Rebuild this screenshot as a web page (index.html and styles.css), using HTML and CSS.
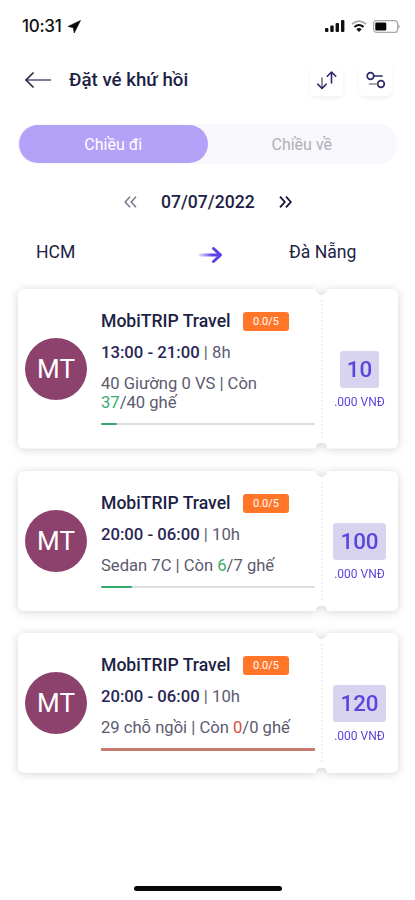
FILE: index.html
```html
<!DOCTYPE html>
<html lang="vi">
<head>
<meta charset="utf-8">
<meta name="viewport" content="width=device-width, initial-scale=1">
<title>Đặt vé khứ hồi</title>
<link rel="stylesheet" href="styles.css">
</head>
<body>
<div class="screen">
  <div class="status">
    <span class="clock">10:31</span>
    <svg class="location" width="13" height="13" viewBox="0 0 13 13"><path d="M12.5.5 0 6.400l5.300 1.300.9 5.300z" fill="#080808" stroke="#080808" stroke-width=".6" stroke-linejoin="round"/></svg>
    <svg class="signal" width="20" height="12" viewBox="0 0 20 12" fill="#111"><rect x="0" y="8" width="3.4" height="4" rx="1"/><rect x="5.3" y="5.5" width="3.4" height="6.5" rx="1"/><rect x="10.6" y="3" width="3.4" height="9" rx="1"/><rect x="16" y="0" width="3.4" height="12" rx="1"/></svg>
    <svg class="wifi" width="16" height="12" viewBox="0 0 16 12" fill="none"><path d="M1 4.2q7-6.2 14 0" stroke="#aaa" stroke-width="1.8"/><path d="M3.4 7q4.6-4 9.2 0" stroke="#111" stroke-width="2.1"/><path d="M5.3 9.2q2.7-2.2 5.4 0L8 12z" fill="#111"/></svg>
    <svg class="battery" width="28" height="13" viewBox="0 0 28 13"><rect x=".6" y=".6" width="24" height="11.8" rx="3" fill="#fff" stroke="#aaa" stroke-width="1.2"/><rect x="2.3" y="2.4" width="11" height="8.2" rx="1.4" fill="#080808"/><path d="M25.5 4.2q2.2 2.3 0 4.6z" fill="#888"/></svg>
  </div>

  <header class="header">
    <svg width="27" height="16" viewBox="0 0 27 16" fill="none" stroke-linecap="round" stroke-linejoin="round"><path d="M1 8h24.500" stroke="#55536f" stroke-width="1.500"/><path d="M8 1 1 8l7 7" stroke="#27244f" stroke-width="1.700"/></svg>
    <h1 class="title">Đặt vé khứ hồi</h1>
    <button class="tool" aria-label="Sắp xếp"><svg width="20" height="19" viewBox="0 0 20 19" fill="none" stroke-width="1.600" stroke-linecap="round" stroke-linejoin="round"><path d="M5 7v10" stroke="#777589"/><path d="m.8 13.200 4.200 4.200 4.200-4.200M14.500 12V1M10.300 5.200 14.500 1l4.200 4.200" stroke="#2b2867"/></svg></button>
    <button class="tool" aria-label="Lọc"><svg width="20" height="18" viewBox="0 0 20 18" fill="none" stroke="#2b2867" stroke-width="1.700" stroke-linecap="round"><circle cx="4.500" cy="5" r="3.300"/><path d="M8.500 5H16"/><circle cx="15" cy="13" r="3.300"/><path d="M3.500 13H11" stroke="#8d8b9c"/></svg></button>
  </header>

  <nav class="tabs">
    <button class="tab active">Chiều đi</button>
    <button class="tab">Chiều về</button>
  </nav>

  <div class="date">
    <svg width="13" height="12" viewBox="0 0 13 12" fill="none" stroke="#77758a" stroke-width="1.500"><path d="M6 .7 1.200 6 6 11.300M12 .7 7.200 6l4.800 5.300"/></svg>
    <span class="day">07/07/2022</span>
    <svg width="13" height="12" viewBox="0 0 13 12" fill="none" stroke="#161438" stroke-width="1.800"><path d="M1 .7 5.800 6 1 11.300M7 .7 11.800 6 7 11.300"/></svg>
  </div>

  <div class="route">
    <span class="from">HCM</span>
    <svg width="25" height="18" viewBox="0 0 25 18" fill="none" stroke-linecap="round" stroke-linejoin="round"><defs><linearGradient id="fade" gradientUnits="userSpaceOnUse" x1="0" y1="0" x2="14" y2="0"><stop offset="0" stop-color="#5a42e8" stop-opacity=".1"/><stop offset="1" stop-color="#5a42e8"/></linearGradient></defs><path d="M2 9h20" stroke="url(#fade)" stroke-width="2.800"/><path d="m15.500 2.500 7 6.500-7 6.500" stroke="#5a42e8" stroke-width="3"/></svg>
    <span class="to">Đà Nẵng</span>
  </div>

  <main class="list">
    <div class="lift"><article class="card tall">
      <div class="avatar">MT</div>
      <div class="body">
        <div class="name"><h2>MobiTRIP Travel</h2><span class="rate">0.0/5</span></div>
        <p class="time"><b>13:00 - 21:00</b> | 8h</p>
        <p class="seats">40 Giường 0 VS | Còn<br><i>37</i>/40 ghế</p>
        <div class="bar"><div class="fill" style="width:7.5%"></div></div>
      </div>
      <div class="stub"><strong>10</strong><span class="unit">.000 VNĐ</span></div>
    </article></div>
    <div class="lift"><article class="card">
      <div class="avatar">MT</div>
      <div class="body">
        <div class="name"><h2>MobiTRIP Travel</h2><span class="rate">0.0/5</span></div>
        <p class="time"><b>20:00 - 06:00</b> | 10h</p>
        <p class="seats">Sedan 7C | Còn <i>6</i>/7 ghế</p>
        <div class="bar"><div class="fill" style="width:14.3%"></div></div>
      </div>
      <div class="stub"><strong>100</strong><span class="unit">.000 VNĐ</span></div>
    </article></div>
    <div class="lift"><article class="card full">
      <div class="avatar">MT</div>
      <div class="body">
        <div class="name"><h2>MobiTRIP Travel</h2><span class="rate">0.0/5</span></div>
        <p class="time"><b>20:00 - 06:00</b> | 10h</p>
        <p class="seats">29 chỗ ngồi | Còn <i>0</i>/0 ghế</p>
        <div class="bar"><div class="fill" style="width:100%"></div></div>
      </div>
      <div class="stub"><strong>120</strong><span class="unit">.000 VNĐ</span></div>
    </article></div>
  </main>
  <div class="home"></div>
</div>
</body>
</html>
```
FILE: styles.css
```css
* { box-sizing: border-box; margin: 0; padding: 0; }
body { background: #fff; color: #211f45; font-family: Roboto, "Liberation Sans", sans-serif; }
button { border: 0; background: none; font: inherit; }
svg { display: block; flex: none; }
.screen { width: 415px; height: 900px; display: flex; flex-direction: column; overflow: hidden; }

.status { height: 52px; padding: 0 14px 0 22px; display: flex; align-items: center; }
.clock { width: 42px; font: 500 17px/20px Inter, sans-serif; letter-spacing: -.3px; color: #111; }
.location { margin-left: 4px; }
.signal { margin-left: auto; }
.wifi { margin-left: 6px; }
.battery { margin-left: 6px; }

.header { height: 58px; padding: 0 23px 2px 25px; display: flex; align-items: center; }
.title { flex: 1; margin-left: 17px; font-size: 18.7px; font-weight: 500; line-height: 24px; }
.tool { width: 33px; height: 31px; display: grid; place-items: center; border-radius: 5px; box-shadow: 0 2px 5px rgba(0,0,0,.06); }
.tool + .tool { margin-left: 16px; }

.tabs { height: 40px; margin: 14px 18px 0; display: flex; padding: 1px; border-radius: 20px; background: #f8f7fc; }
.tab { flex: 1; border-radius: 19px; font-size: 16px; color: #b0afb7; }
.tab.active { background: #b3a2f7; color: #fff; }

.date { height: 28px; margin-top: 24px; display: flex; align-items: center; padding-left: 124px; }
.day { width: 95px; margin: 0 23px 0 24px; font-size: 17.6px; font-weight: 500; line-height: 24px; white-space: nowrap; }

.route { height: 30px; margin-top: 24px; padding: 0 59px 0 36px; display: grid; grid-template-columns: 162px 25px 67px; column-gap: 0; align-items: center; font-size: 17.6px; }
.route span { line-height: 24px; white-space: nowrap; margin-top: -6px; }
.route .to { margin-left: 66px; }

.list { margin: 19px 17px 0 18px; display: flex; flex-direction: column; gap: 22px; }
.lift { filter: drop-shadow(0 1px 5px rgba(0,0,0,.17)); }
.card {
  display: grid; grid-template-columns: 62px 214px 77px; column-gap: 14px; align-items: center;
  padding-left: 7px; border-radius: 6px; background: #fff;
  -webkit-mask: radial-gradient(circle 6px at 303.500px 0, transparent 95%, #000) top / 100% 51% no-repeat,
    radial-gradient(circle 6px at 303.500px 100%, transparent 95%, #000) bottom / 100% 51% no-repeat;
  mask: radial-gradient(circle 6px at 303.500px 0, transparent 95%, #000) top / 100% 51% no-repeat,
    radial-gradient(circle 6px at 303.500px 100%, transparent 95%, #000) bottom / 100% 51% no-repeat;
}
.avatar { width: 62px; height: 62px; border-radius: 50%; display: grid; place-items: center; background: #8d426d; color: #fff; font-size: 26px; }
.body { padding: 20px 0 23px; }
.tall .body { padding-bottom: 24px; }
.name { display: flex; align-items: center; height: 24px; }
.name h2 { width: 142px; font-size: 17.6px; font-weight: 500; line-height: 24px; white-space: nowrap; }
.rate { width: 46px; height: 19px; border-radius: 3px; background: #ff7629; color: #fff; font-size: 11px; line-height: 19px; text-align: center; }
.time { margin-top: 8px; font-size: 16.7px; line-height: 24px; color: #5c5a70; white-space: nowrap; }
.time b { font-weight: 500; color: #292657; }
.seats { margin-top: 9px; font-size: 16.6px; line-height: 19px; color: #5c5a70; white-space: nowrap; }
.seats i { font-style: normal; color: #35ad6c; }
.bar { height: 2px; margin-top: 11px; background: #dcdcdf; border-radius: 1px; }
.fill { height: 2px; background: #35a86c; border-radius: 1px; }
.full .seats i { color: #d44d3c; }
.full .bar, .full .fill { height: 3px; background: #c57b70; }
.full .body { padding-bottom: 22px; }

.stub { align-self: stretch; margin-left: -8px; display: flex; flex-direction: column; align-items: center; justify-content: center; padding: 21px 10px 0 0; border-left: 2px dotted #f0f0f2; clip-path: inset(10px 0); }
.stub strong { height: 37px; padding: 0 7px; border-radius: 3px; background: #d8d3ee; color: #5946dc; font-size: 22.400px; font-weight: 500; line-height: 37px; }
.unit { height: 20px; padding-top: 4px; font-size: 12px; line-height: 20px; color: #5946dc; white-space: nowrap; }
.home { width: 148px; height: 5px; margin: auto auto 9px 134px; border-radius: 3px; background: #080808; }
```
